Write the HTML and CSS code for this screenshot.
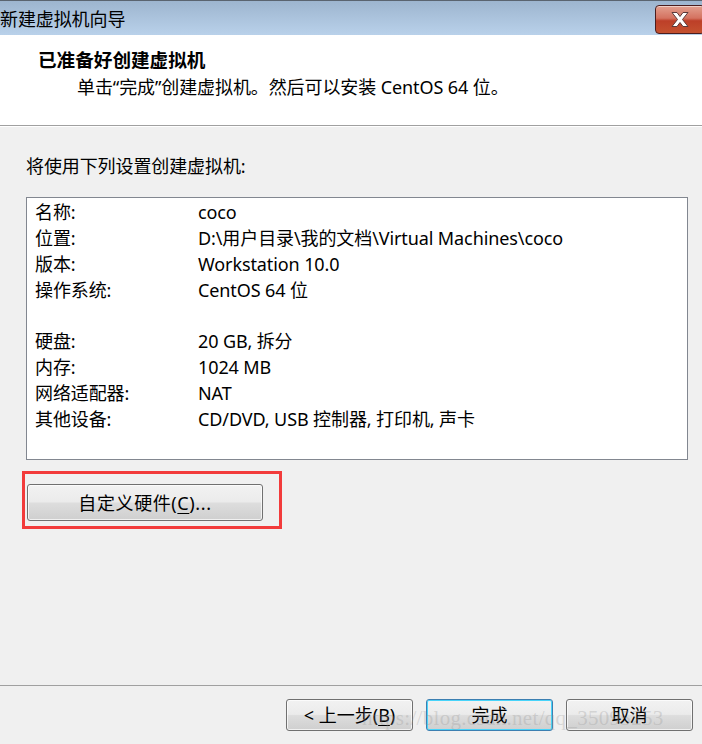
FILE: index.html
```html
<!DOCTYPE html>
<html lang="zh-CN">
<head>
<meta charset="utf-8">
<title>新建虚拟机向导</title>
<link rel="stylesheet" href="styles.css">
</head>
<body>
<div class="window">
  <div class="titlebar">
    <span class="title">新建虚拟机向导</span>
    <span class="close">
      <svg width="24" height="17" viewBox="0 0 24 17">
        <path d="M4 1.5 L9 1.5 L12 5.5 L15 1.5 L20 1.5 L14.5 8.5 L20 15.5 L15 15.5 L12 11.5 L9 15.5 L4 15.5 L9.5 8.5 Z" fill="#fff" stroke="#5b3a3a" stroke-width="1" stroke-linejoin="round"/>
      </svg>
    </span>
  </div>
  <div class="header">
    <div class="h-title">已准备好创建虚拟机</div>
    <div class="h-sub">单击“完成”创建虚拟机。然后可以安装 CentOS 64 位。</div>
  </div>
  <div class="body">
    <div class="intro">将使用下列设置创建虚拟机:</div>
    <div class="list">
      <div class="row"><span>名称:</span><span>coco</span></div>
      <div class="row"><span>位置:</span><span>D:\用户目录\我的文档\Virtual Machines\coco</span></div>
      <div class="row"><span>版本:</span><span>Workstation 10.0</span></div>
      <div class="row"><span>操作系统:</span><span>CentOS 64 位</span></div>
      <div class="row"><span></span><span></span></div>
      <div class="row"><span>硬盘:</span><span>20 GB, 拆分</span></div>
      <div class="row"><span>内存:</span><span>1024 MB</span></div>
      <div class="row"><span>网络适配器:</span><span>NAT</span></div>
      <div class="row"><span>其他设备:</span><span>CD/DVD, USB 控制器, 打印机, 声卡</span></div>
    </div>
    <div class="mark">
      <button class="btn custom">自定义硬件(<u>C</u>)...</button>
    </div>
  </div>
  <div class="footer">
    <button class="btn">&lt; 上一步(<u>B</u>)</button>
    <button class="btn default">完成</button>
    <button class="btn">取消</button>
    <span class="watermark">https://blog.csdn.net/qq_35095253</span>
  </div>
</div>
</body>
</html>
```
FILE: styles.css
```css
html, body {
  margin: 0;
  padding: 0;
  background: #f0f0f0;
}
.window {
  width: 702px;
  height: 744px;
  display: flex;
  flex-direction: column;
  overflow: hidden;
  font-family: "Noto Sans", "Noto Sans CJK SC", sans-serif;
  font-size: 18px;
  letter-spacing: -0.1px;
  color: #000;
}
.titlebar {
  height: 35px;
  box-sizing: border-box;
  border-top: 1px solid #5a6470;
  background: linear-gradient(#9db5cf, #b9d1ea);
  display: flex;
  justify-content: space-between;
  align-items: flex-start;
}
.title {
  font-family: "Noto Sans CJK SC", sans-serif;
  font-size: 18px;
  line-height: 34px;
}
.close {
  margin-top: 4px;
  width: 50px;
  height: 29px;
  margin-right: -3px;
  box-sizing: border-box;
  border: 1px solid #4b1d1d;
  border-radius: 4px;
  background: linear-gradient(#e3a08f 0%, #d47260 45%, #bd3f28 55%, #c4512f 100%);
  box-shadow: inset 0 1px 0 rgba(255,255,255,0.5);
  display: flex;
  align-items: center;
  padding-left: 12px;
}
.header {
  background: #fff;
  height: 91px;
  box-sizing: border-box;
  border-bottom: 1px solid #a0a0a0;
  padding-top: 13px;
}
.h-title {
  font-family: "Noto Sans CJK SC", sans-serif;
  font-weight: bold;
  font-size: 18.6px;
  letter-spacing: 0;
  line-height: 22px;
  padding-left: 38px;
}
.h-sub {
  line-height: 22px;
  margin-top: 6px;
  padding-left: 77px;
}
.body {
  flex: 1;
  padding: 28px 14px 0 26px;
  border-top: 1px solid #fff;
}
.intro {
  line-height: 22px;
}
.list {
  margin-top: 20px;
  width: 662px;
  height: 263px;
  box-sizing: border-box;
  background: #fff;
  border: 1px solid #828790;
  padding: 1px 0 0 8px;
}
.row {
  display: grid;
  grid-template-columns: 163px 1fr;
  height: 25.9px;
  line-height: 26px;
  white-space: nowrap;
}
.mark {
  margin-top: 11px;
  margin-left: -4px;
  width: 260px;
  height: 58px;
  box-sizing: border-box;
  border: 3px solid #f23b3b;
  padding: 10px 0 0 2px;
}
.btn {
  font-family: "Noto Sans", "Noto Sans CJK SC", sans-serif;
  font-size: 18px;
  color: #000;
  height: 32px;
  width: 127px;
  padding: 0;
  border: 1px solid #707070;
  border-radius: 3px;
  background: linear-gradient(#f2f2f2 0%, #ebebeb 48%, #dddddd 52%, #cfcfcf 100%);
  box-shadow: inset 0 0 0 1px rgba(255,255,255,0.7);
  line-height: 28px;
}
.btn u {
  text-decoration-thickness: 1px;
  text-underline-offset: 3px;
}
.custom {
  width: 236px;
  height: 37px;
  letter-spacing: 0.6px;
}
.footer {
  height: 59px;
  box-sizing: border-box;
  border-top: 1px solid #a0a0a0;
  padding: 13px 9px 0 0;
  display: flex;
  justify-content: flex-end;
  gap: 13px;
  position: relative;
}
.default {
  border-color: #3c7fb1;
  box-shadow: inset 0 0 0 1px #48d4fa;
}
.watermark {
  position: absolute;
  left: 362px;
  top: 20px;
  font-family: "Liberation Serif", serif;
  font-size: 21px;
  letter-spacing: 0.3px;
  color: rgba(150, 150, 150, 0.3);
  white-space: nowrap;
  pointer-events: none;
}
```
